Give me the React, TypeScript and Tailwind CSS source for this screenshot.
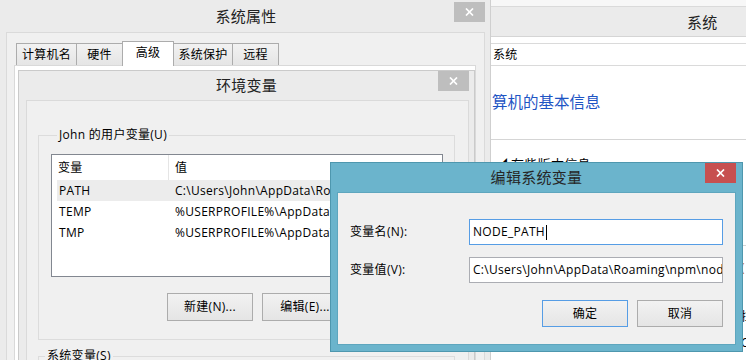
import type { ReactNode } from "react";

function CloseGlyph() {
  return (
    <svg width="9" height="8" viewBox="0 0 9 8">
      <path d="M1 0.5L8 7.5M8 0.5L1 7.5" stroke="white" strokeWidth="1.7" />
    </svg>
  );
}

function CloseButton({ red, className }: { red?: boolean; className: string }) {
  return (
    <div
      className={`absolute w-[31px] h-[20px] flex items-center justify-center ${
        red ? "bg-[#c75050]" : "bg-[#bebebe]"
      } ${className}`}
    >
      <CloseGlyph />
    </div>
  );
}

function WinButton({ children, focused, short }: { children: ReactNode; focused?: boolean; short?: boolean }) {
  return (
    <div
      className={`w-[86px] ${short ? "h-[27px]" : "h-[28px]"} flex items-center justify-center border bg-linear-to-b from-[#f2f2f2] to-[#e5e5e5] ${
        focused ? "border-[#569de5]" : "border-[#acacac]"
      }`}
    >
      {children}
    </div>
  );
}

const tabs = [
  { label: "计算机名", w: "w-[61px]" },
  { label: "硬件", w: "w-[47px]" },
  { label: "高级", w: "w-[52px]", active: true },
  { label: "系统保护", w: "w-[60px]" },
  { label: "远程", w: "w-[47px]" },
];

const userVars = [
  { name: "PATH", value: "C:\\Users\\John\\AppData\\Roaming\\npm", selected: true },
  { name: "TEMP", value: "%USERPROFILE%\\AppData\\Local\\Temp" },
  { name: "TMP", value: "%USERPROFILE%\\AppData\\Local\\Temp" },
];

function SystemWindow() {
  return (
    <div className="absolute left-[490px] top-0 w-[256px] h-[360px] bg-white border-l border-[#d5d5d5] flex flex-col">
      <div className="h-[7px] shrink-0 bg-[#f7f7f7] border-b border-[#dadada]" />
      <div className="h-[30px] shrink-0 bg-[#ebebeb] border-b border-[#d5d5d5] flex items-center pl-[196px] pt-[2px] text-[15px] text-[#222]">
        系统
      </div>
      <div className="h-[7px] shrink-0 border-b border-[#dadada]" />
      <div className="h-[22px] shrink-0 border-b border-[#dadada] flex items-center pl-[2px]">系统</div>
      <div className="h-[74px] shrink-0 border-b border-[#d5d5d5] flex items-center pl-[1px] text-[15.5px] tracking-normal text-[#1e55c4]">
        算机的基本信息
      </div>
      <div className="h-[106px] shrink-0 border-b border-[#d5d5d5] pl-[3px] pt-[15px] text-[13px] whitespace-nowrap">
        ◢ 有些版本信息
      </div>
      <div className="flex flex-col pl-[250px] whitespace-nowrap text-[#c0702a]">
        <div className="h-[21px] mt-[11px] leading-[21px]">(</div>
        <div className="h-[21px] mt-[28px] leading-[21px] text-black">拉</div>
        <div className="h-[21px] mt-[5px] leading-[21px] text-black">C</div>
      </div>
    </div>
  );
}

function SysPropsWindow() {
  return (
    <div className="absolute left-0 top-0 w-[491px] h-[380px] bg-[#ebebeb] border-r border-[#cfcfcf] flex flex-col">
      <div className="relative h-[32px] shrink-0 flex items-center justify-center text-[15px] text-[#222] pl-[2px]">
        系统属性
        <CloseButton className="right-[5px] top-[2px]" />
      </div>
      <div className="flex-1 ml-[6px] mr-[5px] bg-[#f0f0f0] border-l border-t border-r border-[#dadada] flex flex-col">
        <div className="h-[32px] shrink-0 flex items-end pl-[9px]">
          {tabs.map((t, i) =>
            t.active ? (
              <div
                key={t.label}
                className={`${t.w} h-[25px] -mb-[1px] relative z-10 -ml-[1px] bg-white border-l border-t border-r border-[#acacac] flex items-center justify-center pb-[3px]`}
              >
                {t.label}
              </div>
            ) : (
              <div
                key={t.label}
                className={`${t.w} h-[22px] ${i > 0 ? "-ml-[1px]" : ""} bg-linear-to-b from-[#f2f2f2] to-[#e5e5e5] border-l border-t border-r border-[#acacac] flex items-center justify-center`}
              >
                {t.label}
              </div>
            )
          )}
        </div>
        <div className="ml-[7px] w-[462px] flex-1 bg-white border border-[#d9d9d9]" />
      </div>
    </div>
  );
}

function EnvWindow() {
  return (
    <div className="absolute left-[18px] top-[70px] w-[457px] h-[330px] bg-[#ebebeb] border border-[#cacaca] flex flex-col">
      <div className="relative h-[29px] shrink-0 flex items-center justify-center text-[15px] text-[#222]">
        环境变量
        <CloseButton className="right-[5px] top-0" />
      </div>
      <div className="flex-1 ml-[7px] mr-[5px] bg-[#f0f0f0] border-l border-t border-r border-[#dadada] flex flex-col pl-[11px] pr-[13px] pt-[26px]">
        <fieldset className="shrink-0 border border-[#dcdcdc] px-[12px] pr-[11px] pt-[11px] pb-[18px]">
          <legend className="ml-[6px] px-[2px] leading-[16px]">John 的用户变量(U)</legend>
          <div className="h-[123px] border border-[#828790] bg-white flex flex-col">
            <div className="h-[25px] shrink-0 flex">
              <div className="w-[117px] border-r border-[#e5e5e5] pl-[6px] flex items-center">变量</div>
              <div className="pl-[6px] flex items-center">值</div>
            </div>
            {userVars.map((v) => (
              <div
                key={v.name}
                className={`h-[21px] shrink-0 ml-[5px] flex items-center whitespace-nowrap ${
                  v.selected ? "bg-[#ececec]" : ""
                }`}
              >
                <div className="w-[112px] pl-[2px]">{v.name}</div>
                <div className="pl-[6px]">{v.value}</div>
              </div>
            ))}
          </div>
          <div className="mt-[16px] flex justify-end gap-[9px]">
            <WinButton>新建(N)...</WinButton>
            <WinButton>编辑(E)...</WinButton>
            <WinButton>删除(D)</WinButton>
          </div>
        </fieldset>
        <fieldset className="shrink-0 mt-[8px] border border-[#dcdcdc] h-[60px]">
          <legend className="ml-[6px] px-[2px] leading-[16px]">系统变量(S)</legend>
        </fieldset>
      </div>
    </div>
  );
}

function EditWindow() {
  return (
    <div className="absolute left-[330px] top-[162px] w-[413px] h-[190px] bg-[#6bb4cc] border border-[#4e97ae] flex flex-col">
      <div className="relative h-[29px] shrink-0 flex items-center justify-center text-[15px] text-[#262626]">
        编辑系统变量
        <CloseButton red className="right-[6px] top-0" />
      </div>
      <div className="flex-1 ml-[6px] mr-[6px] mb-[6px] bg-[#f0f0f0] border border-[#5ea6be] flex flex-col pl-[12px] pr-[12px] pt-[26px]">
        <div className="grid grid-cols-[119px_254px] gap-y-[12px]">
          <div className="flex items-center">变量名(N):</div>
          <div className="h-[26px] border border-[#569de5] bg-white pl-[3px] flex items-center whitespace-nowrap overflow-hidden">
            NODE_PATH
            <span className="inline-block w-[1px] h-[15px] bg-black ml-[1px]" />
          </div>
          <div className="flex items-center">变量值(V):</div>
          <div className="h-[26px] border border-[#abadb3] bg-white pl-[3px] flex items-center whitespace-nowrap overflow-hidden">
            C:\Users\John\AppData\Roaming\npm\node_modules
          </div>
        </div>
        <div className="mt-[17px] flex justify-end gap-[9px]">
          <WinButton focused short>
            确定
          </WinButton>
          <WinButton short>取消</WinButton>
        </div>
      </div>
    </div>
  );
}

export default function App() {
  return (
    <div className="relative w-[746px] h-[360px] overflow-hidden bg-white text-[12px] tracking-[0.3px] text-black font-['Open_Sans','Noto_Sans_CJK_SC',sans-serif]">
      <SystemWindow />
      <SysPropsWindow />
      <EnvWindow />
      <EditWindow />
    </div>
  );
}
